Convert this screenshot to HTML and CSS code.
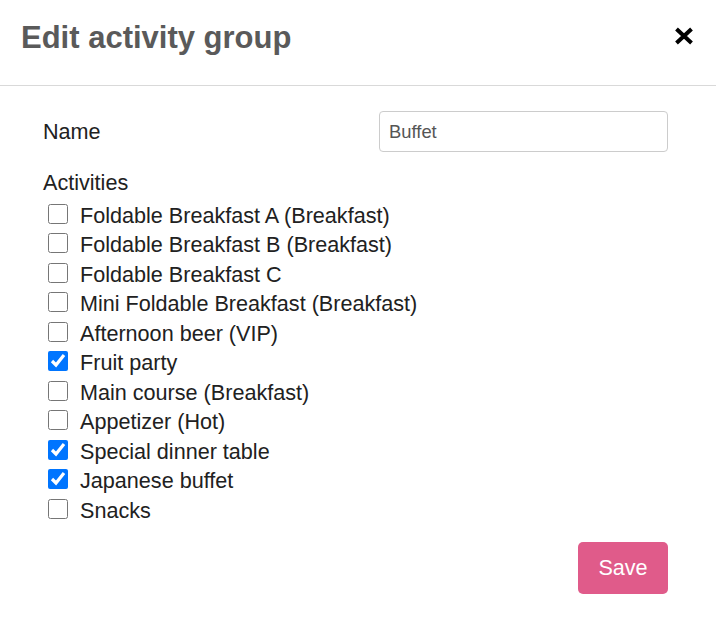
FILE: index.html
```html
<!DOCTYPE html>
<html>
<head>
<meta charset="utf-8">
<link rel="stylesheet" href="styles.css">
</head>
<body>
<div class="modal">
  <div class="modal-header">
    <h1 class="title">Edit activity group</h1>
    <button class="close" aria-label="Close">
      <svg width="20" height="18" viewBox="0 0 20 18"><path d="M2.5 2 L17.5 16 M17.5 2 L2.5 16" stroke="#000" stroke-width="4" stroke-linecap="butt" fill="none"/></svg>
    </button>
  </div>
  <div class="modal-body">
    <div class="field-row">
      <label class="field-label" for="name">Name</label>
      <input class="text-input" id="name" type="text" value="Buffet">
    </div>
    <div class="section-label">Activities</div>
    <ul class="check-list">
      <li><label class="check"><input type="checkbox"><span>Foldable Breakfast A (Breakfast)</span></label></li>
      <li><label class="check"><input type="checkbox"><span>Foldable Breakfast B (Breakfast)</span></label></li>
      <li><label class="check"><input type="checkbox"><span>Foldable Breakfast C</span></label></li>
      <li><label class="check"><input type="checkbox"><span>Mini Foldable Breakfast (Breakfast)</span></label></li>
      <li><label class="check"><input type="checkbox"><span>Afternoon beer (VIP)</span></label></li>
      <li><label class="check"><input type="checkbox" checked><span>Fruit party</span></label></li>
      <li><label class="check"><input type="checkbox"><span>Main course (Breakfast)</span></label></li>
      <li><label class="check"><input type="checkbox"><span>Appetizer (Hot)</span></label></li>
      <li><label class="check"><input type="checkbox" checked><span>Special dinner table</span></label></li>
      <li><label class="check"><input type="checkbox" checked><span>Japanese buffet</span></label></li>
      <li><label class="check"><input type="checkbox"><span>Snacks</span></label></li>
    </ul>
    <div class="actions">
      <button class="save">Save</button>
    </div>
  </div>
</div>
</body>
</html>
```
FILE: styles.css
```css
html, body {
  margin: 0;
  padding: 0;
  background: #fff;
  font-family: "Liberation Sans", Arial, sans-serif;
}

.modal {
  width: 716px;
}

.modal-header {
  height: 86px;
  box-sizing: border-box;
  border-bottom: 1px solid #d9d9d9;
  display: flex;
  align-items: center;
  justify-content: space-between;
  padding: 0 22px 10px 21px;
}

.title {
  margin: 0;
  font-size: 31px;
  font-weight: bold;
  color: #5a5a5a;
}

.close {
  border: 0;
  background: none;
  padding: 0;
  width: 20px;
  height: 18px;
  display: flex;
  margin-bottom: 4px;
}

.modal-body {
  padding: 25px 48px 0 43px;
}

.field-row {
  display: grid;
  grid-template-columns: 336px 1fr;
  align-items: center;
}

.field-label {
  font-size: 21.6px;
  color: #212121;
}

.text-input {
  height: 41px;
  box-sizing: border-box;
  border: 1px solid #cccccc;
  border-radius: 4px;
  padding: 0 9px;
  font-family: "Liberation Sans", Arial, sans-serif;
  font-size: 18.4px;
  color: #555;
  outline: none;
}

.section-label {
  margin-top: 16px;
  font-size: 21.6px;
  line-height: 30px;
  color: #212121;
}

.check-list {
  list-style: none;
  margin: 0;
  padding: 3px 0 0 5px;
}

.check-list li {
  height: 29.5px;
  display: flex;
  align-items: center;
}

.check {
  display: flex;
  align-items: center;
  gap: 12px;
  font-size: 21.6px;
  color: #212121;
}

.check input {
  margin: 0;
  width: 20px;
  height: 20px;
  position: relative;
  top: -2px;
}

.actions {
  display: flex;
  justify-content: flex-end;
  margin-top: 16px;
}

.save {
  width: 90px;
  height: 52px;
  border: 0;
  border-radius: 5px;
  background: #e05b8a;
  color: #fff;
  font-family: "Liberation Sans", Arial, sans-serif;
  font-size: 21.6px;
}
```
